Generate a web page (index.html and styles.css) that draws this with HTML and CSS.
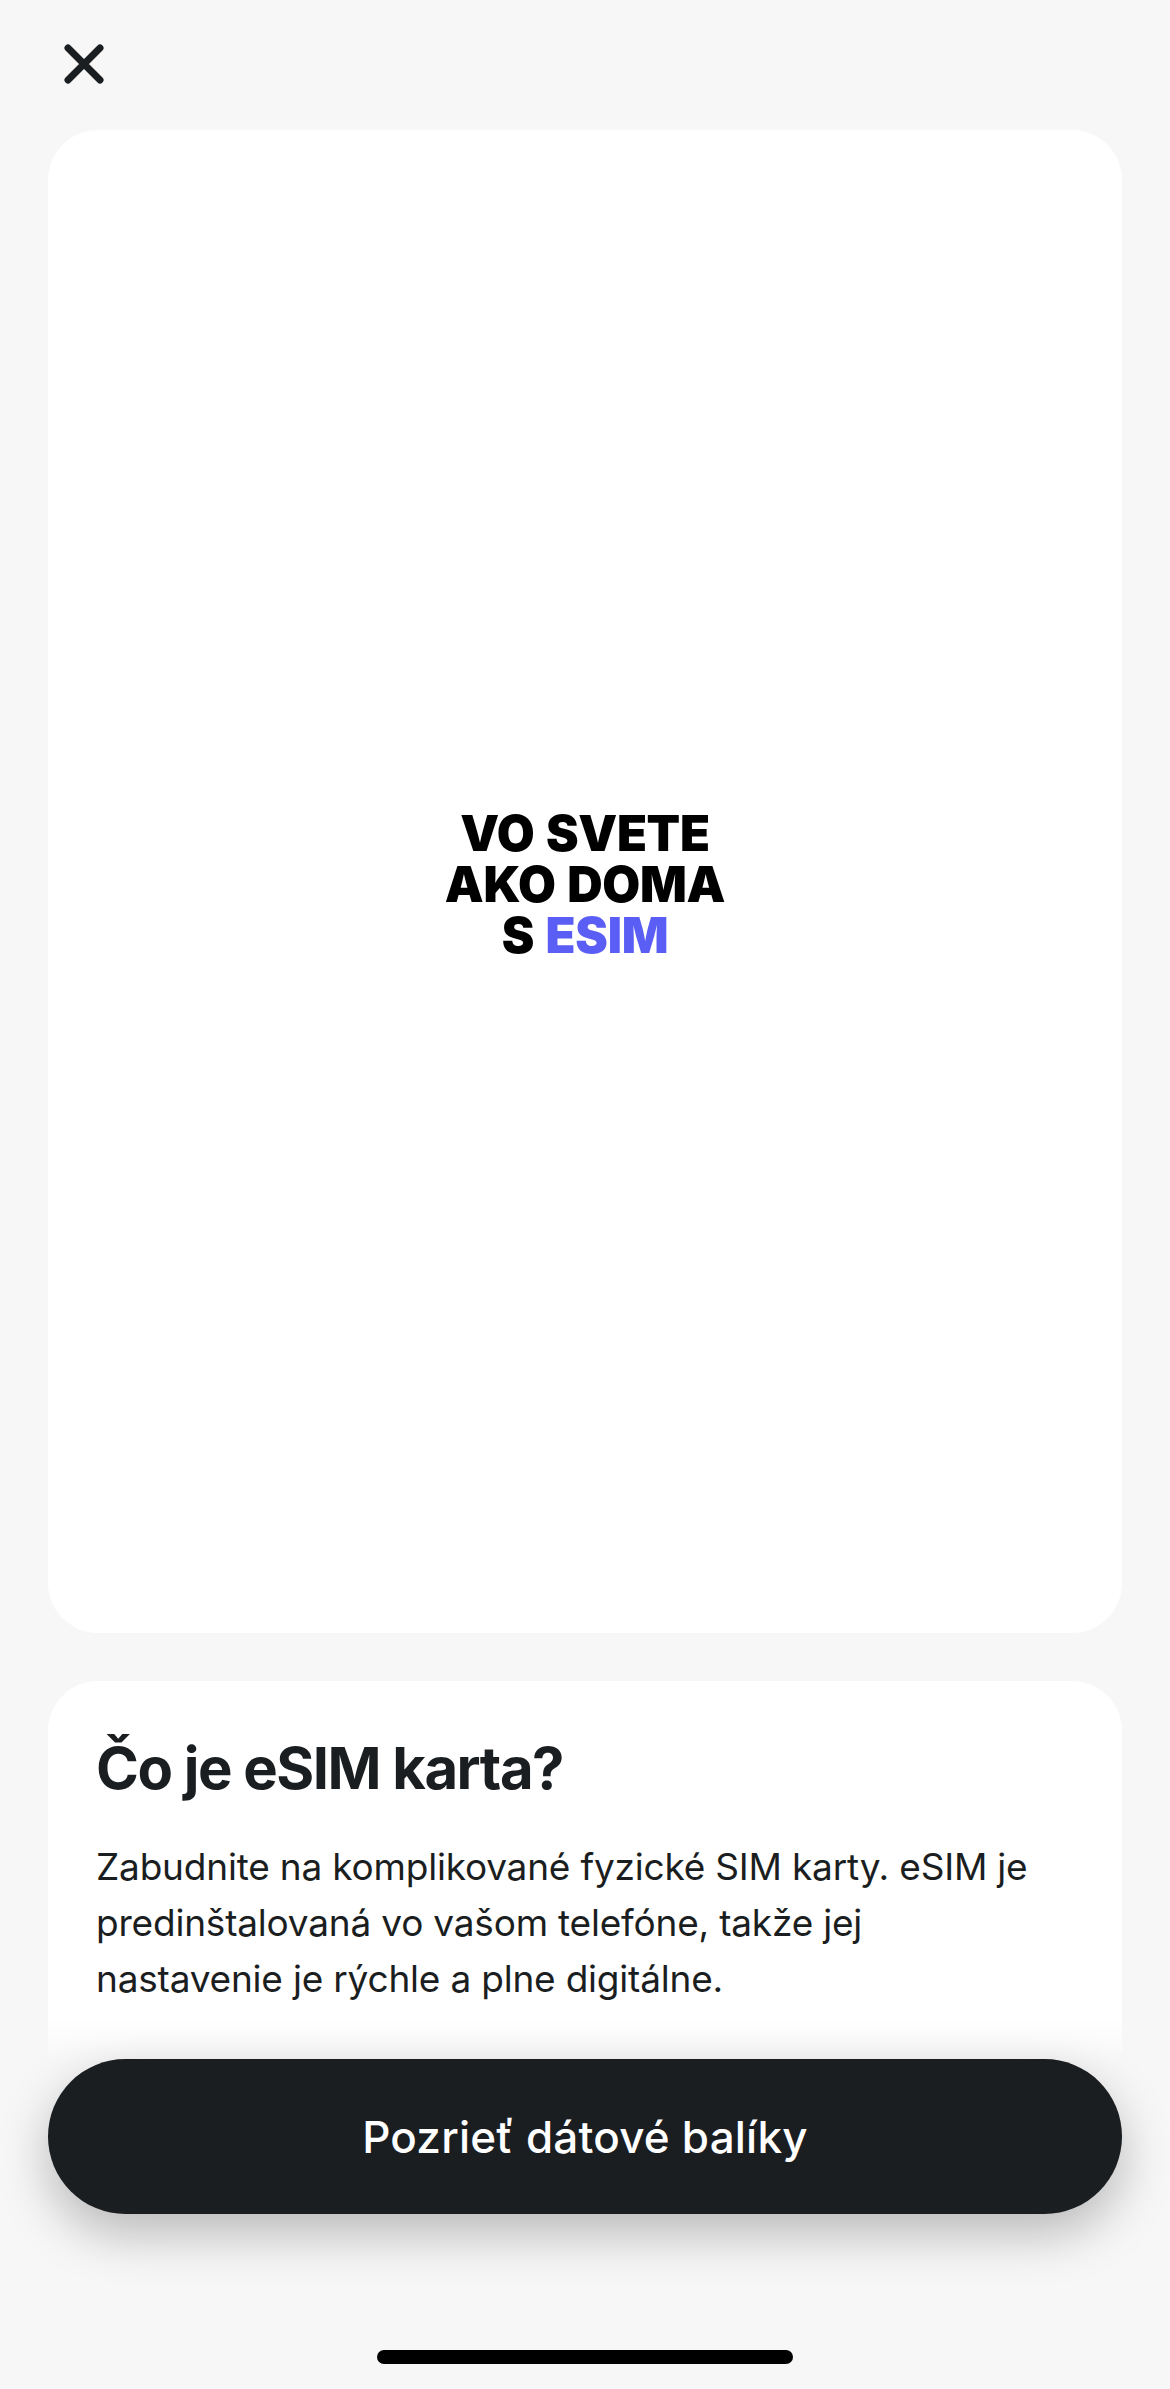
FILE: index.html
```html
<!DOCTYPE html>
<html lang="sk">
<head>
  <meta charset="UTF-8" />
  <meta name="viewport" content="width=device-width, initial-scale=1.0"/>
  <title>eSIM – Vo svete ako doma</title>
  <link rel="stylesheet" href="styles.css">
</head>
<body>
  <div class="screen">
    <div class="topbar">
      <button class="close" aria-label="Zavrieť">
        <svg width="40" height="40" viewBox="0 0 40 40">
          <path d="M4 4 L36 36 M36 4 L4 36" stroke="#1b1e21" stroke-width="7" stroke-linecap="round" fill="none"/>
        </svg>
      </button>
    </div>

    <div class="card hero">
      <div class="slogan">
        <div>VO SVETE</div>
        <div>AKO DOMA</div>
        <div>S <span class="accent">ESIM</span></div>
      </div>
    </div>

    <div class="card info">
      <h2>Čo je eSIM karta?</h2>
      <p>Zabudnite na komplikované fyzické SIM karty. eSIM je predinštalovaná vo vašom telefóne, takže jej<br>nastavenie je rýchle a plne digitálne.</p>
    </div>
  </div>

  <div class="footer">
    <button class="cta">Pozrieť dátové balíky</button>
    <div class="home-indicator"></div>
  </div>
</body>
</html>
```

FILE: styles.css
```css
:root {
  --bg: #f7f7f7;
  --card: #fff;
  --ink: #1b1e21;
  --accent: #5b5ef4;
}
body {
  margin: 0;
  background-color: var(--bg);
  color: var(--ink);
  font-family: Inter, "Noto Sans", sans-serif;
  height: 2389px;
  overflow: hidden;
  position: relative;
}
.screen {
  padding: 0 48px;
}
.topbar {
  height: 130px;
  display: flex;
  align-items: flex-start;
}
.close {
  margin: 44px 0 0 16px;
  padding: 0;
  border: none;
  background: none;
  width: 40px;
  height: 40px;
  display: block;
}
.close svg { display: block; }
.card {
  background-color: var(--card);
  border-radius: 50px;
}
.hero {
  height: 1503px;
  display: flex;
  align-items: center;
  justify-content: center;
}
.slogan {
  text-align: center;
  font-weight: 900;
  font-size: 49px;
  line-height: 51px;
  letter-spacing: -0.3px;
  word-spacing: 2px;
  color: #000;
  margin-top: 6px;
}
.slogan .accent { color: var(--accent); }
.info {
  margin-top: 48px;
  height: 700px;
  padding: 52px 40px 0 48px;
}
.info h2 {
  margin: 0;
  font-size: 58px;
  font-weight: 700;
  line-height: 70px;
  letter-spacing: -1.5px;
}
.info p {
  margin: 36px 0 0;
  font-size: 37px;
  line-height: 56px;
  font-weight: 400;
  letter-spacing: -0.2px;
}
.footer {
  position: absolute;
  left: 0;
  right: 0;
  bottom: 0;
  padding: 40px 48px 0;
  background: linear-gradient(to bottom, rgba(247,247,247,0) 0, var(--bg) 45px);
  display: flex;
  flex-direction: column;
  align-items: center;
}
.cta {
  width: 100%;
  height: 155px;
  border: none;
  border-radius: 78px;
  background-color: var(--ink);
  color: #fff;
  font-family: Inter, "Noto Sans", sans-serif;
  font-size: 44px;
  font-weight: 500;
  letter-spacing: 0.2px;
  box-shadow: 0 20px 50px rgba(0,0,0,0.25);
}
.home-indicator {
  width: 416px;
  height: 14px;
  border-radius: 7px;
  background-color: #000;
  margin: 136px 0 25px;
}
```
